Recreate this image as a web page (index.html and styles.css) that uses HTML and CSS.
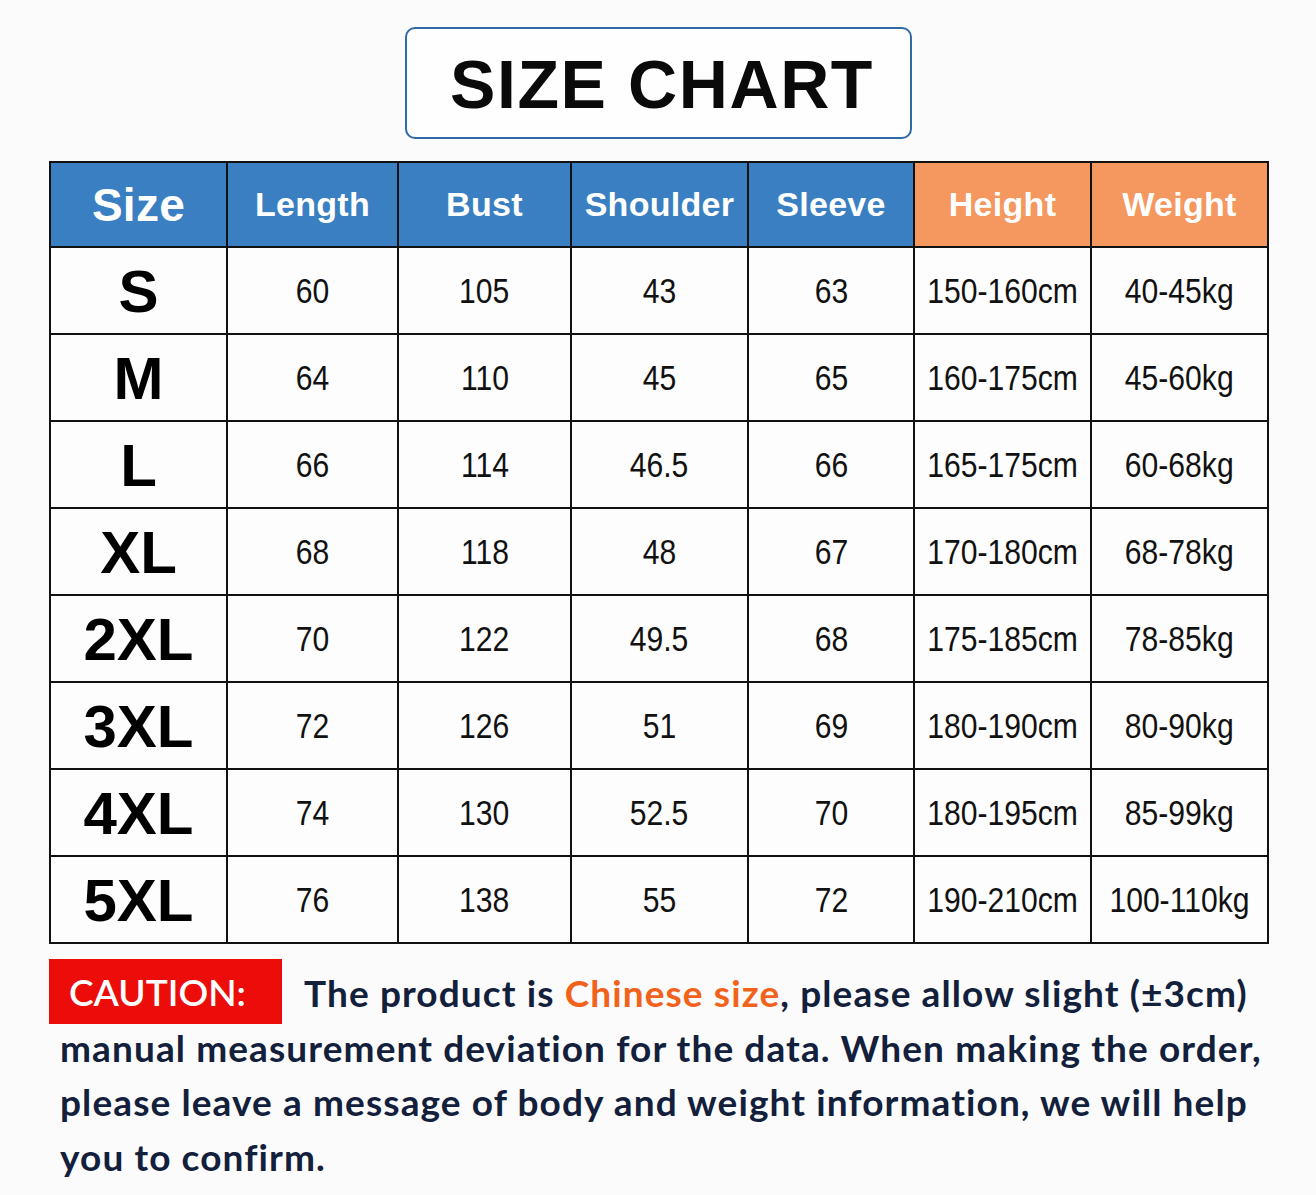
FILE: index.html
```html
<!DOCTYPE html>
<html lang="en">
<head>
<meta charset="utf-8">
<title>Size Chart</title>
<link rel="stylesheet" href="styles.css">
</head>
<body>
<div class="page">
  <div class="title-wrap">
    <div class="title-box">SIZE CHART</div>
  </div>
  <table class="chart">
    <colgroup>
      <col class="c1"><col class="c2"><col class="c3"><col class="c4"><col class="c5"><col class="c6"><col class="c7">
    </colgroup>
    <thead>
      <tr>
        <th class="blue size-h">Size</th>
        <th class="blue">Length</th>
        <th class="blue">Bust</th>
        <th class="blue">Shoulder</th>
        <th class="blue">Sleeve</th>
        <th class="orange">Height</th>
        <th class="orange">Weight</th>
      </tr>
    </thead>
    <tbody>
      <tr><td class="sz">S</td><td><span class="n">60</span></td><td><span class="n">105</span></td><td><span class="n">43</span></td><td><span class="n">63</span></td><td><span class="n">150-160cm</span></td><td><span class="n">40-45kg</span></td></tr>
      <tr><td class="sz">M</td><td><span class="n">64</span></td><td><span class="n">110</span></td><td><span class="n">45</span></td><td><span class="n">65</span></td><td><span class="n">160-175cm</span></td><td><span class="n">45-60kg</span></td></tr>
      <tr><td class="sz">L</td><td><span class="n">66</span></td><td><span class="n">114</span></td><td><span class="n">46.5</span></td><td><span class="n">66</span></td><td><span class="n">165-175cm</span></td><td><span class="n">60-68kg</span></td></tr>
      <tr><td class="sz">XL</td><td><span class="n">68</span></td><td><span class="n">118</span></td><td><span class="n">48</span></td><td><span class="n">67</span></td><td><span class="n">170-180cm</span></td><td><span class="n">68-78kg</span></td></tr>
      <tr><td class="sz">2XL</td><td><span class="n">70</span></td><td><span class="n">122</span></td><td><span class="n">49.5</span></td><td><span class="n">68</span></td><td><span class="n">175-185cm</span></td><td><span class="n">78-85kg</span></td></tr>
      <tr><td class="sz">3XL</td><td><span class="n">72</span></td><td><span class="n">126</span></td><td><span class="n">51</span></td><td><span class="n">69</span></td><td><span class="n">180-190cm</span></td><td><span class="n">80-90kg</span></td></tr>
      <tr><td class="sz">4XL</td><td><span class="n">74</span></td><td><span class="n">130</span></td><td><span class="n">52.5</span></td><td><span class="n">70</span></td><td><span class="n">180-195cm</span></td><td><span class="n">85-99kg</span></td></tr>
      <tr><td class="sz">5XL</td><td><span class="n">76</span></td><td><span class="n">138</span></td><td><span class="n">55</span></td><td><span class="n">72</span></td><td><span class="n">190-210cm</span></td><td><span class="n">100-110kg</span></td></tr>
    </tbody>
  </table>
  <p class="notice"><span class="caution">CAUTION:</span>The product is <span class="hl">Chinese size</span>, please allow slight (±3cm)<br>manual measurement deviation for the data. When making the order,<br>please leave a message of body and weight information, we will help<br>you to confirm.</p>
</div>
</body>
</html>
```

FILE: styles.css
```css
html, body {
  margin: 0;
  padding: 0;
  background: #fbfbfb;
}

.page {
  width: 1316px;
  padding-top: 27px;
  font-family: "Liberation Sans", Arial, sans-serif;
  color: #000;
}

.title-wrap {
  display: flex;
  justify-content: center;
}

.title-box {
  width: 495px;
  height: 107px;
  border: 2px solid #2f6aa6;
  border-radius: 10px;
  background: #fefefe;
  display: flex;
  align-items: center;
  justify-content: center;
  font-weight: 700;
  font-size: 68px;
  letter-spacing: 1.6px;
  color: #0a0a0a;
  padding-top: 1px;
  padding-left: 8px;
  box-sizing: content-box;
}

.chart {
  margin: 22px 0 0 49px;
  width: 1218px;
  border-collapse: collapse;
  table-layout: fixed;
  border: 2px solid #111;
}

.c1 { width: 177px; }
.c2 { width: 171px; }
.c3 { width: 173px; }
.c4 { width: 177px; }
.c5 { width: 166px; }
.c6 { width: 177px; }
.c7 { width: 177px; }

.chart th, .chart td {
  border: 2px solid #111;
  text-align: center;
  vertical-align: middle;
  padding: 0;
  white-space: nowrap;
  box-sizing: border-box;
}

.chart th {
  height: 85px;
  color: #fff;
  font-weight: 700;
  font-size: 34px;
  letter-spacing: 0.3px;
}

.chart th.size-h {
  font-size: 46px;
}

.blue { background: #3a7fc2; }
.orange { background: #f5985f; }

.chart td {
  height: 87px;
  background: #fdfdfd;
}

.chart td.sz {
  font-weight: 700;
  font-size: 60px;
  padding-top: 2px;
}

.n {
  display: inline-block;
  font-size: 35px;
  transform: scaleX(0.86);
  color: #111;
}

.notice {
  margin: 22px 0 0 0;
  padding: 0 0 0 60px;
  font-family: Lato, "Open Sans", sans-serif;
  font-weight: 700;
  font-size: 37px;
  letter-spacing: 1.1px;
  line-height: 54.5px;
  color: #12203c;
  white-space: nowrap;
}

.caution {
  display: inline-block;
  margin: -16px 22px -4px -11px;
  width: 233px;
  height: 65px;
  line-height: 65px;
  box-sizing: border-box;
  padding-left: 20px;
  background: #ec0d0a;
  color: #fff;
  font-weight: 600;
  font-size: 37px;
  letter-spacing: 0;
  vertical-align: middle;
}

.hl {
  color: #f2621a;
}
```
